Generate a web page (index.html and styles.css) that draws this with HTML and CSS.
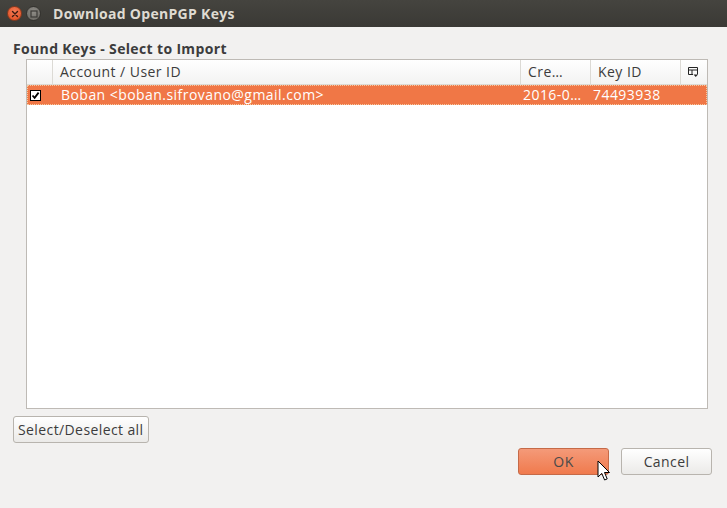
FILE: index.html
```html
<!DOCTYPE html>
<html>
<head>
<meta charset="utf-8">
<link rel="stylesheet" href="styles.css">
</head>
<body>
<div class="window">
  <div class="titlebar">
    <span class="wbtn close"><svg width="8" height="8" viewBox="0 0 8 8"><path d="M1.5 1.5L6.5 6.5M6.5 1.5L1.5 6.5" stroke="#3a1a10" stroke-width="1.4" stroke-linecap="round"/></svg></span>
    <span class="wbtn max"><svg width="8" height="8" viewBox="0 0 8 8"><rect x="1" y="1" width="6" height="6" fill="none" stroke="#3c3b37" stroke-width="1.2"/></svg></span>
    <span class="title">Download OpenPGP Keys</span>
  </div>
  <div class="body">
    <div class="label">Found Keys - Select to Import</div>
    <div class="tree">
      <div class="hdr">
        <div class="hc c0"></div>
        <div class="hc c1">Account / User ID</div>
        <div class="hc c2">Cre…</div>
        <div class="hc c3">Key ID</div>
        <div class="hc c4"><svg width="10" height="11" viewBox="0 0 10 11"><path d="M0.5 0.5H9.5V7.5M0.5 0.5V7.5H5M0.5 3H9.5M4 3V7.5" fill="none" stroke="#222" stroke-width="1"/><path d="M5.5 7.5H10L7.75 10Z" fill="#222"/></svg></div>
      </div>
      <div class="row sel">
        <div class="rc c0"><span class="cb"><svg width="9" height="9" viewBox="0 0 9 9"><path d="M1.5 4.5L3.6 6.8L7.6 1.6" fill="none" stroke="#000" stroke-width="1.8"/></svg></span></div>
        <div class="rc c1 t1">Boban &lt;boban.sifrovano@gmail.com&gt;</div>
        <div class="rc c2">2016-0…</div>
        <div class="rc c3">74493938</div>
        <div class="rc c4"></div>
      </div>
    </div>
    <div class="btnrow1"><button class="btn">Select/Deselect all</button></div>
    <div class="btnrow2">
      <button class="btn ok">OK</button>
      <button class="btn cancel">Cancel</button>
    </div>
  </div>
  <svg class="cursor" width="14" height="22" viewBox="0 0 14 22"><path d="M1 1V17L4.8 13.4L7.6 20L10.2 18.9L7.5 12.5H12.5Z" fill="#fff" stroke="#000" stroke-width="1" stroke-linejoin="round"/></svg>
</div>
</body>
</html>
```
FILE: styles.css
```css
* { box-sizing: border-box; }
html, body { margin: 0; padding: 0; }
body {
  width: 727px; height: 508px; overflow: hidden;
  background: #f2f1f0;
  font-family: "Open Sans", "Noto Sans", sans-serif;
  font-size: 14px;
  letter-spacing: 0.45px;
  color: #3c3c3c;
}
.window { position: relative; width: 727px; height: 508px; }
.titlebar {
  height: 27px;
  background: linear-gradient(#45443f, #3a3935);
  display: flex; align-items: center;
  padding-left: 7px;
}
.wbtn {
  width: 15px; height: 15px; border-radius: 50%;
  display: flex; align-items: center; justify-content: center;
}
.close { background: radial-gradient(circle at 50% 35%, #f47c57, #df4a1c); border: 1px solid #8a3a1e; }
.max { background: radial-gradient(circle at 50% 35%, #8f8d87, #66645f); border: 1px solid #33322e; margin-left: 4px; }
.title {
  margin-left: 12px;
  color: #dfdbd2;
  font-weight: bold;
  font-size: 14px;
  letter-spacing: 0.3px;
}
.body { padding: 12px 15px 0 13px; }
.label { font-weight: bold; color: #3c3c3c; height: 20px; line-height: 20px; font-size: 14px; letter-spacing: 0.35px; }
.tree {
  margin-left: 13px;
  width: 682px; height: 350px;
  background: #fff;
  border: 1px solid #bebab5;
}
.hdr {
  display: flex; height: 25px;
  background: linear-gradient(#ffffff, #f3f3f2);
  border-bottom: 1px solid #dcdad5;
}
.hc { border-right: 1px solid #dcdad5; line-height: 24px; padding-left: 7px; color: #3c3c3c; white-space: nowrap; overflow: hidden; }
.c0 { width: 26px; flex: none; padding-left: 0; }
.c1 { width: 468px; flex: none; }
.c2 { width: 70px; flex: none; }
.c3 { width: 90px; flex: none; }
.c4 { flex: 1; border-right: none; display: flex; align-items: center; justify-content: center; padding-left: 0; padding-right: 2px; }
.row { display: flex; height: 20px; }
.row.sel { background: #f07746; outline: 1px dotted #f7c9a0; outline-offset: -1px; color: #fff; }
.rc { line-height: 19px; white-space: nowrap; overflow: hidden; padding-left: 2px; }
.rc.c0 { display: flex; align-items: center; padding-left: 3px; }
.rc.t1 { padding-left: 8px; }
.cb {
  width: 11px; height: 11px; background: #fff; border: 1px solid #000;
  display: flex; align-items: center; justify-content: center;
}
.btnrow1 { margin-top: 7px; display: flex; }
.btn {
  font-family: inherit; font-size: 14px; letter-spacing: 0.4px; color: #3c3c3c;
  height: 27px; border-radius: 3px;
  border: 1px solid #b8b4ae;
  background: linear-gradient(#ffffff, #ebeae8);
  padding: 0 4px;
  line-height: 25px;
}
.btnrow2 { margin-top: 5px; display: flex; justify-content: flex-end; gap: 12px; }
.ok, .cancel { width: 91px; }
.ok { background: linear-gradient(#f49a79, #f07a4d); border-color: #c56a48; color: #4a4a4a; }
.cursor { position: absolute; left: 597px; top: 460px; }
```
